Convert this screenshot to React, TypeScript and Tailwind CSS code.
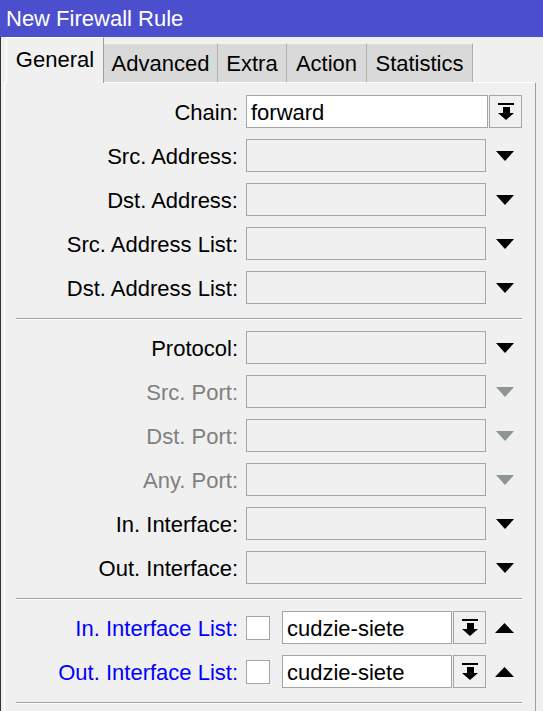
import React from "react";

const DownArrow = ({ gray }: { gray?: boolean }) => (
  <svg width="18" height="10" viewBox="0 0 18 10">
    <polygon points="0,0 18,0 9,10" fill={gray ? "#8f968f" : "#000"} />
  </svg>
);

const UpArrow = () => (
  <svg width="19" height="10" viewBox="0 0 19 10">
    <polygon points="0,10 19,10 9.5,0" fill="#000" />
  </svg>
);

const ComboIcon = () => (
  <svg width="16" height="17" viewBox="0 0 16 17">
    <rect x="0" y="0" width="16" height="2" fill="#000" />
    <rect x="5" y="4" width="7" height="6" fill="#000" />
    <polygon points="0,10 16,10 8,17" fill="#000" />
  </svg>
);

type Tone = "black" | "gray" | "blue";

const toneClass: Record<Tone, string> = {
  black: "text-black",
  gray: "text-[#808080]",
  blue: "text-[#0000ff]",
};

const Label = ({ text, tone }: { text: string; tone: Tone }) => (
  <div className={`w-[233px] text-right whitespace-nowrap pt-[2px] ${toneClass[tone]}`}>{text}</div>
);

const PlainRow = ({ label, tone = "black" }: { label: string; tone?: Tone }) => (
  <div className="flex items-center h-[33px]">
    <Label text={label} tone={tone} />
    <div className="ml-[8px] w-[240px] h-[33px] border border-[#a5a5a5] bg-[#f0f0f0]" />
    <div className="w-[38px] flex justify-center items-center">
      <DownArrow gray={tone === "gray"} />
    </div>
  </div>
);

const Separator = () => (
  <div className="ml-[11px] w-[506px] h-[2px] border-t border-[#a0a0a0] border-b border-b-white" />
);

const ComboRow = ({ label }: { label: string }) => (
  <div className="flex items-center h-[33px]">
    <Label text={label} tone="blue" />
    <div className="ml-[8px] w-[24px] h-[24px] border border-[#a5a5a5] bg-white" />
    <div className="ml-[12px] w-[170px] h-[33px] border border-[#a5a5a5] bg-white flex items-center pl-[4px] pt-[2px] text-black">
      cudzie-siete
    </div>
    <div className="ml-[1px] w-[33px] h-[33px] border border-[#a5a5a5] bg-[#f0f0f0] flex items-center justify-center">
      <ComboIcon />
    </div>
    <div className="w-[37px] flex justify-center items-center">
      <UpArrow />
    </div>
  </div>
);

export default function App() {
  const tabs = [
    { name: "Advanced", w: "w-[114px]" },
    { name: "Extra", w: "w-[69px]" },
    { name: "Action", w: "w-[80px]" },
    { name: "Statistics", w: "w-[106px]" },
  ];
  return (
    <div
      className="w-[543px] h-[711px] bg-[#f0f0f0] overflow-hidden text-[22px] leading-none"
      style={{ fontFamily: '"Liberation Sans", Arial, sans-serif' }}
    >
      <div className="h-[37px] bg-[#4c4fcd] text-white text-[22px] flex items-center pl-[6px] pt-[1px]">
        New Firewall Rule
      </div>
      <div className="h-[674px] border-l border-[#333333]">
        <div className="flex items-end h-[45px] pl-[5px]">
          <div className="relative z-10 w-[98px] h-[46px] -mb-[1px] bg-[#f0f0f0] border-t border-l border-white border-r border-r-[#a0a0a0] flex items-center justify-center pb-[2px]">
            General
          </div>
          {tabs.map((t) => (
            <div
              key={t.name}
              className={`${t.w} h-[39px] bg-[#d9d9d9] border-t border-[#f4f4f4] border-r border-r-[#b0b0b0] flex items-center justify-center pt-[2px]`}
            >
              {t.name}
            </div>
          ))}
        </div>
        <div className="ml-[3px] w-[532px] h-[700px] border-t border-l border-white border-r border-r-[#a0a0a0]">
          <div className="flex flex-col gap-[11px] pt-[12px]">
            <div className="flex items-center h-[33px]">
              <Label text="Chain:" tone="black" />
              <div className="ml-[8px] w-[242px] h-[33px] border border-[#a5a5a5] bg-white flex items-center pl-[4px] pt-[2px]">
                forward
              </div>
              <div className="ml-[1px] w-[33px] h-[33px] border border-[#a5a5a5] bg-[#f0f0f0] flex items-center justify-center">
                <ComboIcon />
              </div>
            </div>
            <PlainRow label="Src. Address:" />
            <PlainRow label="Dst. Address:" />
            <PlainRow label="Src. Address List:" />
            <PlainRow label="Dst. Address List:" />
          </div>
          <div className="mt-[14px]">
            <Separator />
          </div>
          <div className="flex flex-col gap-[11px] mt-[11px]">
            <PlainRow label="Protocol:" />
            <PlainRow label="Src. Port:" tone="gray" />
            <PlainRow label="Dst. Port:" tone="gray" />
            <PlainRow label="Any. Port:" tone="gray" />
            <PlainRow label="In. Interface:" />
            <PlainRow label="Out. Interface:" />
          </div>
          <div className="mt-[14px]">
            <Separator />
          </div>
          <div className="flex flex-col gap-[11px] mt-[11px]">
            <ComboRow label="In. Interface List:" />
            <ComboRow label="Out. Interface List:" />
          </div>
          <div className="mt-[14px]">
            <Separator />
          </div>
        </div>
      </div>
    </div>
  );
}
